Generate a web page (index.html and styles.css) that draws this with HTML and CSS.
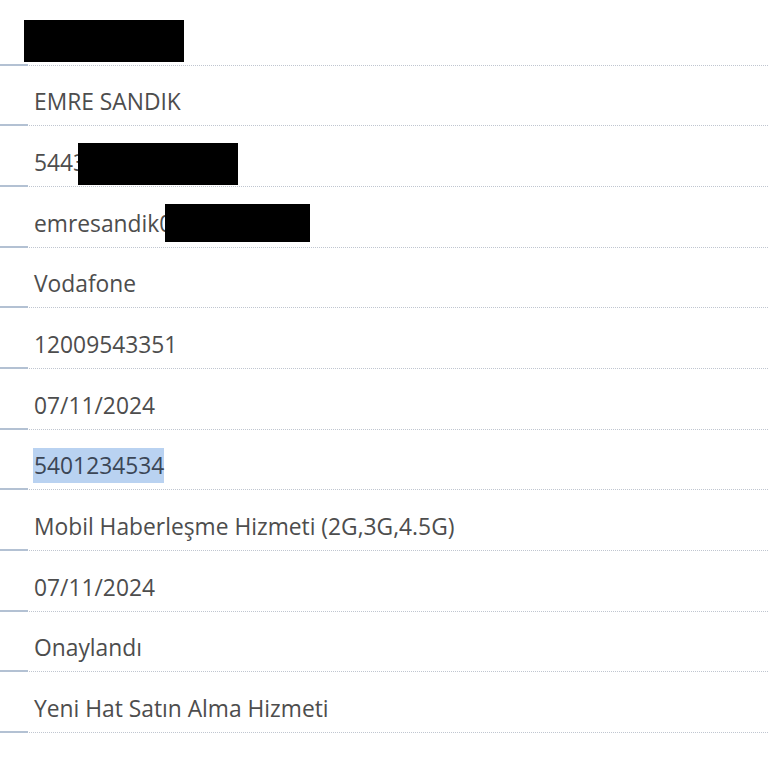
FILE: index.html
```html
<!DOCTYPE html>
<html lang="tr">
<head>
<meta charset="utf-8">
<link rel="stylesheet" href="styles.css">
</head>
<body>
<div class="list">
  <div class="row head"><span class="redact r-head"></span></div>
  <div class="row"><span class="val">EMRE SANDIK</span></div>
  <div class="row"><span class="val">5443</span><span class="redact r-phone"></span></div>
  <div class="row"><span class="val">emresandik0</span><span class="redact r-mail"></span></div>
  <div class="row"><span class="val">Vodafone</span></div>
  <div class="row"><span class="val">12009543351</span></div>
  <div class="row"><span class="val">07/11/2024</span></div>
  <div class="row"><span class="val sel">5401234534</span></div>
  <div class="row"><span class="val">Mobil Haberleşme Hizmeti (2G,3G,4.5G)</span></div>
  <div class="row"><span class="val">07/11/2024</span></div>
  <div class="row"><span class="val">Onaylandı</span></div>
  <div class="row"><span class="val">Yeni Hat Satın Alma Hizmeti</span></div>
</div>
</body>
</html>
```
FILE: styles.css
```css
html, body {
  margin: 0;
  padding: 0;
  background: #fff;
}
body {
  font-family: "Open Sans", "Liberation Sans", sans-serif;
  color: #4d4d4d;
  width: 768px;
  height: 768px;
  overflow: hidden;
}
.list {
  display: flex;
  flex-direction: column;
}
.row {
  position: relative;
  box-sizing: border-box;
  height: 60.7px;
  display: flex;
  align-items: flex-end;
  padding: 0 0 8px 34px;
  border-bottom: 1px dotted #c0c6d0;
}
.row.head {
  height: 65.5px;
}
.row::after {
  content: "";
  position: absolute;
  left: 0;
  bottom: -1px;
  width: 28px;
  height: 2px;
  background: #b3c1d3;
}
.val {
  font-size: 22.8px;
  line-height: 1.362;
  white-space: nowrap;
}
.sel {
  background: #b9d2f1;
  color: #3b4656;
  padding: 2px 0 2px 1px;
  margin: 0 0 -2px -1px;
}
.redact {
  position: absolute;
  background: #000;
}
.r-head { left: 24px; top: 20px; width: 160px; height: 42px; }
.r-phone { left: 78px; top: 17px; width: 160px; height: 42px; }
.r-mail { left: 165px; top: 17px; width: 145px; height: 38px; }
```
